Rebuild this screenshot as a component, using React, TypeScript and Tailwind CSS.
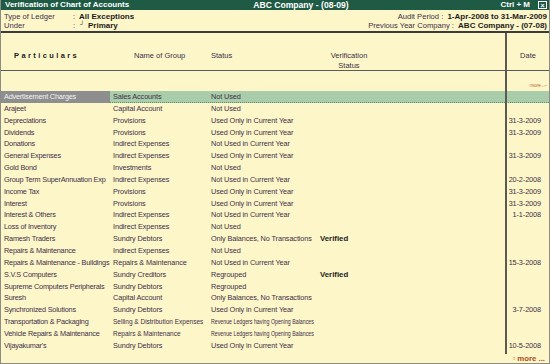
import React from "react";

type Row = {
  name: string;
  group: string;
  status: string;
  verified?: string;
  date?: string;
  small?: boolean;
};

const rows: Row[] = [
  { name: "Advertisement Charges", group: "Sales Accounts", status: "Not Used" },
  { name: "Arajeet", group: "Capital Account", status: "Not Used" },
  { name: "Depreciations", group: "Provisions", status: "Used Only in Current Year", date: "31-3-2009" },
  { name: "Dividends", group: "Provisions", status: "Used Only in Current Year", date: "31-3-2009" },
  { name: "Donations", group: "Indirect Expenses", status: "Not Used in Current Year" },
  { name: "General Expenses", group: "Indirect Expenses", status: "Used Only in Current Year", date: "31-3-2009" },
  { name: "Gold Bond", group: "Investments", status: "Not Used" },
  { name: "Group Term SuperAnnuation Exp", group: "Indirect Expenses", status: "Not Used in Current Year", date: "20-2-2008" },
  { name: "Income Tax", group: "Provisions", status: "Used Only in Current Year", date: "31-3-2009" },
  { name: "Interest", group: "Provisions", status: "Used Only in Current Year", date: "31-3-2009" },
  { name: "Interest & Others", group: "Indirect Expenses", status: "Not Used in Current Year", date: "1-1-2008" },
  { name: "Loss of Inventory", group: "Indirect Expenses", status: "Not Used" },
  { name: "Ramesh Traders", group: "Sundry Debtors", status: "Only Balances, No Transactions", verified: "Verified" },
  { name: "Repairs & Maintenance", group: "Indirect Expenses", status: "Not Used" },
  { name: "Repairs & Maintenance - Buildings", group: "Repairs & Maintenance", status: "Not Used in Current Year", date: "15-3-2008" },
  { name: "S.V.S Computers", group: "Sundry Creditors", status: "Regrouped", verified: "Verified" },
  { name: "Supreme Computers Peripherals", group: "Sundry Debtors", status: "Regrouped" },
  { name: "Suresh", group: "Capital Account", status: "Only Balances, No Transactions" },
  { name: "Synchronized Solutions", group: "Sundry Debtors", status: "Used Only in Current Year", date: "3-7-2008" },
  { name: "Transportation & Packaging", group: "Selling & Distribution Expenses", status: "Revenue Ledgers having Opening Balances", small: true },
  { name: "Vehicle Repairs & Maintenance", group: "Repairs & Maintenance", status: "Revenue Ledgers having Opening Balances", small: true },
  { name: "Vijayakumar's", group: "Sundry Debtors", status: "Used Only in Current Year", date: "10-5-2008" },
];

const cols = "grid grid-cols-[109px_98px_109px_188px_44px]";

export default function App() {
  return (
    <div className="w-[550px] h-[364px] bg-[#fcf6c9] text-[#3f2f48] flex flex-col overflow-hidden border-x border-b border-[#8c8c84] font-['Liberation_Sans',Arial,sans-serif] text-[7.3px]">
      {/* Title bar */}
      <div className="h-[10px] bg-[#1f5a45] text-white font-bold text-[8px] leading-[10px] flex items-center pl-[4px] pr-[2px] shrink-0">
        <div className="flex-1">Verification of Chart of Accounts</div>
        <div className="flex-1 text-center pl-[50px] text-[8.6px]">ABC Company - (08-09)</div>
        <div className="flex-1 flex justify-end items-center gap-[8px]">
          <span>Ctrl + M</span>
          <span className="w-[9px] h-[8px] border border-white flex items-center justify-center text-[7px] leading-none">×</span>
        </div>
      </div>

      {/* Ledger info */}
      <div className="h-[22.5px] flex justify-between pt-[1.5px] pl-[3px] pr-[2px] leading-[9.5px] border-b-2 border-[#3c3c3c] shrink-0">
        <div className="flex flex-col text-[7.6px]">
          <div className="flex">
            <span className="w-[69px]">Type of Ledger</span>
            <span className="w-[6px]">:</span>
            <span className="font-bold text-[#1c1c1c] text-[8px]">All Exceptions</span>
          </div>
          <div className="flex">
            <span className="w-[69px]">Under</span>
            <span className="w-[7px]">:</span>
            <span className="text-[#1c1c1c] text-[6px] leading-[7px] w-[8px]">┘</span>
            <span className="font-bold text-[#1c1c1c] text-[8px]">Primary</span>
          </div>
        </div>
        <div className="flex flex-col items-end text-[7.6px]">
          <div>
            Audit Period :{" "}
            <span className="font-bold text-[#1c1c1c] text-[8px] pl-[2px]">1-Apr-2008 to 31-Mar-2009</span>
          </div>
          <div>
            Previous Year Company :{" "}
            <span className="font-bold text-[#1c1c1c] text-[8px] pl-[2px]">ABC Company - (07-08)</span>
          </div>
        </div>
      </div>

      {/* Column headings */}
      <div className={`${cols} h-[38.5px] border-b border-[#5a5a5a] leading-[10px] text-[7.5px] shrink-0`}>
        <div className="pt-[18.5px] pl-[13px] font-bold text-[#1c1c1c] tracking-[2.4px]">Particulars</div>
        <div className="pt-[18.5px] pl-[24px]">Name of Group</div>
        <div className="pt-[18.5px] pl-[3px]">Status</div>
        <div className="pt-[18.5px]">
          <div className="w-[64px] text-center">
            Verification
            <br />
            Status
          </div>
        </div>
        <div className="pt-[18.5px] text-center border-l-2 border-[#5a5a52]">Date</div>
      </div>

      {/* Scroll indicator band */}
      <div className={`${cols} h-[20px] shrink-0`}>
        <div className="col-span-4" />
        <div className="border-l-2 border-[#5a5a52] flex items-end justify-end pr-[2px] pb-[3px] text-[4.5px] leading-none text-[#b8622a]">
          ↑more...–
        </div>
      </div>

      {/* Ledger rows */}
      {rows.map((r, i) => {
        const hl = i === 0;
        return (
          <div
            key={i}
            className={`${cols} h-[11.85px] leading-[11.8px] whitespace-nowrap tracking-[-0.1px] shrink-0 ${hl ? "bg-[#a9ccab] border-b border-dotted border-[#5f8d70]" : ""}`}
          >
            <div className={`pl-[3px] overflow-hidden tracking-[-0.2px] ${hl ? "bg-[#8e8e8e] text-[#f2f2f2]" : ""}`}>{r.name}</div>
            <div className="pl-[3px]">
              {r.small ? (
                <span className="inline-block origin-left scale-x-[0.89] tracking-normal">{r.group}</span>
              ) : (
                r.group
              )}
            </div>
            <div className="pl-[3px]">
              {r.small ? (
                <span className="inline-block origin-left scale-x-[0.72] tracking-normal">{r.status}</span>
              ) : (
                r.status
              )}
            </div>
            <div className="pl-[3px] font-bold text-[#1c1c1c] text-[7.8px] tracking-normal">{r.verified}</div>
            <div className="border-l-2 border-[#5a5a52] text-right pr-[8px]">{r.date}</div>
          </div>
        );
      })}

      {/* Filler + more */}
      <div className={`${cols} flex-1`}>
        <div className="col-span-4" />
        <div className="border-l-2 border-[#5a5a52]" />
      </div>
      <div className="h-[9px] flex justify-end items-center pr-[4px] shrink-0">
        <span className="text-[#b04a1a] font-bold text-[7.8px] leading-none">
          <span className="text-[5px] align-middle pr-[2px]">↕</span>more ...
        </span>
      </div>
    </div>
  );
}
